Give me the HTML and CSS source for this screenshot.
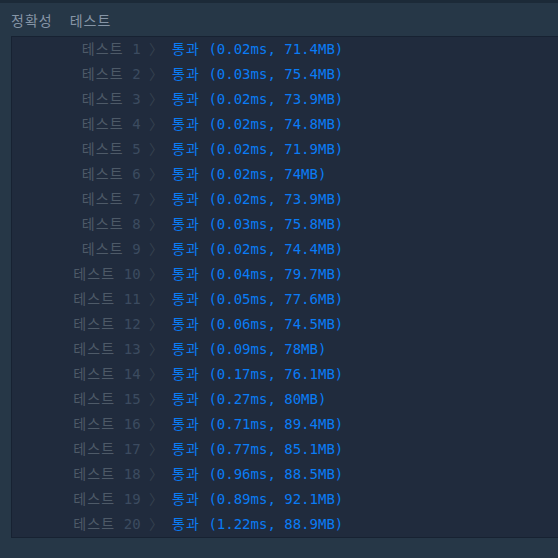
FILE: index.html
```html
<!DOCTYPE html>
<html lang="ko">
<head>
<meta charset="UTF-8">
<meta name="viewport" content="width=device-width, initial-scale=1.0">
<title>채점 결과</title>
<link rel="stylesheet" href="styles.css">
</head>
<body>

<div class="top-strip"></div>

<div class="tabs">
    <span class="tab">정확성</span>
    <span class="tab">테스트</span>
</div>

<div class="result-panel">
    <table class="result-table">
        <tbody>
            <tr><td class="label"><span class="ko">테스트</span> <span class="num">1</span> <span class="arrow">〉</span></td><td class="pass"><span class="ko">통과</span> (0.02ms, 71.4MB)</td></tr>
            <tr><td class="label"><span class="ko">테스트</span> <span class="num">2</span> <span class="arrow">〉</span></td><td class="pass"><span class="ko">통과</span> (0.03ms, 75.4MB)</td></tr>
            <tr><td class="label"><span class="ko">테스트</span> <span class="num">3</span> <span class="arrow">〉</span></td><td class="pass"><span class="ko">통과</span> (0.02ms, 73.9MB)</td></tr>
            <tr><td class="label"><span class="ko">테스트</span> <span class="num">4</span> <span class="arrow">〉</span></td><td class="pass"><span class="ko">통과</span> (0.02ms, 74.8MB)</td></tr>
            <tr><td class="label"><span class="ko">테스트</span> <span class="num">5</span> <span class="arrow">〉</span></td><td class="pass"><span class="ko">통과</span> (0.02ms, 71.9MB)</td></tr>
            <tr><td class="label"><span class="ko">테스트</span> <span class="num">6</span> <span class="arrow">〉</span></td><td class="pass"><span class="ko">통과</span> (0.02ms, 74MB)</td></tr>
            <tr><td class="label"><span class="ko">테스트</span> <span class="num">7</span> <span class="arrow">〉</span></td><td class="pass"><span class="ko">통과</span> (0.02ms, 73.9MB)</td></tr>
            <tr><td class="label"><span class="ko">테스트</span> <span class="num">8</span> <span class="arrow">〉</span></td><td class="pass"><span class="ko">통과</span> (0.03ms, 75.8MB)</td></tr>
            <tr><td class="label"><span class="ko">테스트</span> <span class="num">9</span> <span class="arrow">〉</span></td><td class="pass"><span class="ko">통과</span> (0.02ms, 74.4MB)</td></tr>
            <tr><td class="label"><span class="ko">테스트</span> <span class="num">10</span> <span class="arrow">〉</span></td><td class="pass"><span class="ko">통과</span> (0.04ms, 79.7MB)</td></tr>
            <tr><td class="label"><span class="ko">테스트</span> <span class="num">11</span> <span class="arrow">〉</span></td><td class="pass"><span class="ko">통과</span> (0.05ms, 77.6MB)</td></tr>
            <tr><td class="label"><span class="ko">테스트</span> <span class="num">12</span> <span class="arrow">〉</span></td><td class="pass"><span class="ko">통과</span> (0.06ms, 74.5MB)</td></tr>
            <tr><td class="label"><span class="ko">테스트</span> <span class="num">13</span> <span class="arrow">〉</span></td><td class="pass"><span class="ko">통과</span> (0.09ms, 78MB)</td></tr>
            <tr><td class="label"><span class="ko">테스트</span> <span class="num">14</span> <span class="arrow">〉</span></td><td class="pass"><span class="ko">통과</span> (0.17ms, 76.1MB)</td></tr>
            <tr><td class="label"><span class="ko">테스트</span> <span class="num">15</span> <span class="arrow">〉</span></td><td class="pass"><span class="ko">통과</span> (0.27ms, 80MB)</td></tr>
            <tr><td class="label"><span class="ko">테스트</span> <span class="num">16</span> <span class="arrow">〉</span></td><td class="pass"><span class="ko">통과</span> (0.71ms, 89.4MB)</td></tr>
            <tr><td class="label"><span class="ko">테스트</span> <span class="num">17</span> <span class="arrow">〉</span></td><td class="pass"><span class="ko">통과</span> (0.77ms, 85.1MB)</td></tr>
            <tr><td class="label"><span class="ko">테스트</span> <span class="num">18</span> <span class="arrow">〉</span></td><td class="pass"><span class="ko">통과</span> (0.96ms, 88.5MB)</td></tr>
            <tr><td class="label"><span class="ko">테스트</span> <span class="num">19</span> <span class="arrow">〉</span></td><td class="pass"><span class="ko">통과</span> (0.89ms, 92.1MB)</td></tr>
            <tr><td class="label"><span class="ko">테스트</span> <span class="num">20</span> <span class="arrow">〉</span></td><td class="pass"><span class="ko">통과</span> (1.22ms, 88.9MB)</td></tr>
        </tbody>
    </table>
</div>

</body>
</html>
```

FILE: styles.css
```css
body {
    margin: 0;
    padding: 0;
    background-color: #263747;
    font-family: "DejaVu Sans Mono", "Noto Sans CJK KR", monospace;
    font-size: 14px;
}
.top-strip {
    height: 3px;
    background-color: #1c2a38;
}
.tabs {
    display: flex;
    gap: 17px;
    height: 33px;
    align-items: center;
    padding-left: 11px;
    font-family: "Noto Sans CJK KR", sans-serif;
    letter-spacing: 1px;
    color: #8695a6;
}
.result-panel {
    margin-left: 11px;
    background-color: #202b3d;
    border-top: 1px solid #172232;
    border-left: 1px solid #172232;
    border-bottom: 1px solid #172232;
}
.result-table {
    border-collapse: collapse;
}
.result-table td {
    line-height: 21px;
    padding: 2px 0;
    white-space: pre;
}
.result-table .ko {
    letter-spacing: 1.1px;
}
.result-table .label {
    width: 152px;
    text-align: right;
    color: #4e5a68;
}
.result-table .num {
    color: #3c4b60;
}
.result-table .arrow {
    color: #35414f;
    letter-spacing: 1px;
}
.result-table .pass {
    padding-left: 8px;
    color: #0a7cf5;
}
```
